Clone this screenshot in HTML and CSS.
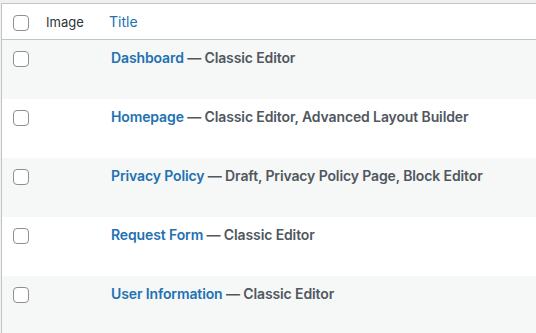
FILE: index.html
```html
<!DOCTYPE html>
<html lang="en">
<head>
<meta charset="utf-8">
<title>Pages</title>
<link rel="stylesheet" href="styles.css">
</head>
<body>
<div class="list">
  <div class="row head">
    <div class="cell check"><input type="checkbox" class="cb" aria-label="Select all"></div>
    <div class="cell image">Image</div>
    <div class="cell title"><a class="sort" href="#">Title</a></div>
  </div>
  <div class="row alt">
    <div class="cell check"><input type="checkbox" class="cb"></div>
    <div class="cell image"></div>
    <div class="cell title"><a class="row-title" href="#">Dashboard</a><span class="state"> — Classic Editor</span></div>
  </div>
  <div class="row">
    <div class="cell check"><input type="checkbox" class="cb"></div>
    <div class="cell image"></div>
    <div class="cell title"><a class="row-title" href="#">Homepage</a><span class="state"> — Classic Editor, Advanced Layout Builder</span></div>
  </div>
  <div class="row alt">
    <div class="cell check"><input type="checkbox" class="cb"></div>
    <div class="cell image"></div>
    <div class="cell title"><a class="row-title" href="#">Privacy Policy</a><span class="state"> — Draft, Privacy Policy Page, Block Editor</span></div>
  </div>
  <div class="row">
    <div class="cell check"><input type="checkbox" class="cb"></div>
    <div class="cell image"></div>
    <div class="cell title"><a class="row-title" href="#">Request Form</a><span class="state"> — Classic Editor</span></div>
  </div>
  <div class="row alt">
    <div class="cell check"><input type="checkbox" class="cb"></div>
    <div class="cell image"></div>
    <div class="cell title"><a class="row-title" href="#">User Information</a><span class="state"> — Classic Editor</span></div>
  </div>
</div>
</body>
</html>
```

FILE: styles.css
```css
html, body {
  margin: 0;
  padding: 0;
}
body {
  background: #f0f0f1;
  font-family: Inter, "Liberation Sans", Arial, sans-serif;
  color: #2c3338;
  padding: 3px 0 0 1px;
  overflow: hidden;
}
.list {
  background: #fff;
  border-top: 1px solid #c3c4c7;
  border-left: 1px solid #c3c4c7;
}
.row {
  display: grid;
  grid-template-columns: 34px 63px 1fr;
  height: 59px;
  background: #fff;
}
.row.alt {
  background: #f6f7f7;
}
.row.head {
  height: 35px;
  border-bottom: 1px solid #c3c4c7;
  background: #fff;
}
.cell {
  box-sizing: border-box;
  min-width: 0;
}
.check {
  padding: 11px 0 0 11px;
}
.cb {
  appearance: none;
  -webkit-appearance: none;
  display: block;
  margin: 0;
  width: 16px;
  height: 16px;
  box-sizing: border-box;
  border: 1px solid #8c8f94;
  border-radius: 4px;
  background: #fff;
}
.head .image,
.head .title {
  padding: 9px 10px 0 10px;
  font-size: 13px;
  line-height: 18px;
}
.sort {
  color: #2271b1;
  text-decoration: none;
}
.row .title {
  padding: 8px 0 0 12px;
  font-size: 14px;
  line-height: 20px;
  letter-spacing: -0.12px;
  white-space: nowrap;
}
.head .title {
  padding-left: 10px;
  letter-spacing: 0;
}
.row-title {
  color: #2271b1;
  font-weight: 600;
  text-decoration: none;
}
.state {
  color: #50575e;
  font-weight: 600;
}
```
